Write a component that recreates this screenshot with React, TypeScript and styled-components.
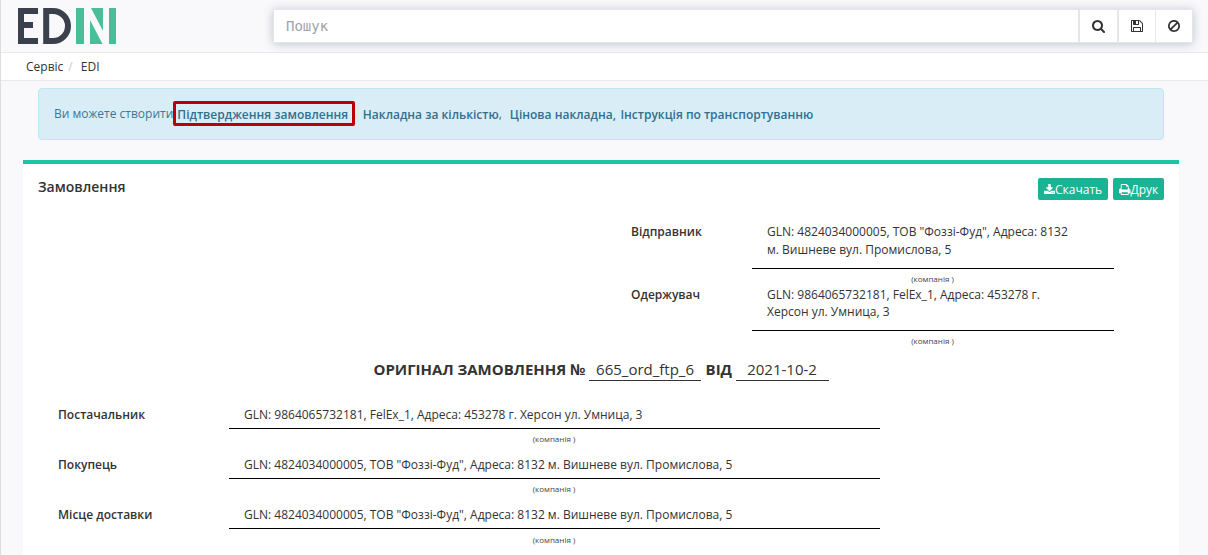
import React from 'react';
import styled, { createGlobalStyle } from 'styled-components';

const GlobalStyle = createGlobalStyle`
  * { box-sizing: border-box; }
  body {
    margin: 0;
    overflow: hidden;
    background: #f9f9fb;
    color: #333;
    font: 12px/18px "Open Sans", sans-serif;
  }
`;

const Page = styled.div`
  height: 555px;
  overflow: hidden;
  border-left: 1px solid #dcdde0;
`;

const Header = styled.header`
  display: flex;
  justify-content: space-between;
  align-items: flex-start;
  height: 53px;
  padding: 8px 15px 0 17px;
  border-bottom: 1px solid #e7eaec;
`;

const SearchBar = styled.div`
  display: flex;
  width: 920px;
  height: 34px;
  margin-top: 1px;
  background: #fff;
  border: 1px solid #e5e6e7;
  box-shadow: 0 1px 9px rgba(60, 70, 100, 0.3);
`;

const SearchInput = styled.input`
  flex: 1;
  min-width: 0;
  border: 0;
  padding: 0 12px;
  outline: 0;
  background: transparent;
  font: 14px "DejaVu Sans Mono", monospace;
  &::placeholder { color: #a2a2a2; opacity: 1; }
`;

const IconButton = styled.button<{ $width: number; $border?: number }>`
  display: flex;
  align-items: center;
  justify-content: center;
  width: ${(p) => p.$width}px;
  padding: 0;
  border: 0;
  border-left: ${(p) => p.$border ?? 1}px solid #e5e6e7;
  background: #fff;
  color: #333;
`;

const Breadcrumb = styled.nav`
  display: flex;
  height: 28px;
  padding: 5px 25px 0;
  background: #fff;
  border-bottom: 1px solid #e7eaec;
`;

const Separator = styled.span`
  width: 17.5px;
  padding-left: 5px;
  color: #ccc;
`;

const Alert = styled.div`
  display: flex;
  height: 52px;
  margin: 7px 44px 20px 37px;
  padding: 16px 15px;
  border: 1px solid #bce8f1;
  border-radius: 4px;
  background: #d9edf7;
  color: #3d7695;
  white-space: pre;
`;

const DocLink = styled.a<{ $gap?: number }>`
  margin: 1px 0 0 ${(p) => p.$gap ?? 0}px;
  font-weight: 600;
  color: #31708f;
`;

const Highlight = styled.span`
  display: flex;
  width: 182px;
  height: 25px;
  margin: -4px 0 0 0;
  padding: 3px 1px 0;
  border: 3px solid #b90006;
  border-radius: 2px;
  line-height: 14px;
`;

const Panel = styled.main`
  height: 400px;
  margin: 0 29px 0 22px;
  border-top: 4px solid #1fc3a4;
  background: #fff;
`;

const PanelHead = styled.div`
  display: flex;
  justify-content: space-between;
  height: 58px;
  padding: 14px 15px 0;
`;

const Title = styled.h5`
  margin: 0;
  font-size: 14px;
  line-height: 18px;
  font-weight: 600;
`;

const Actions = styled.div`
  display: flex;
  gap: 5px;
`;

const ActionButton = styled.button<{ $width: number }>`
  display: flex;
  align-items: center;
  width: ${(p) => p.$width}px;
  height: 22px;
  padding: 1px 0 0 6px;
  border: 0;
  border-radius: 2px;
  background: #1ab394;
  color: #fff;
  font: 12px/18px "Open Sans", sans-serif;

  svg {
    margin-top: -1px;
  }
`;

const Party = styled.div<{ $height: number; $wide?: boolean }>`
  display: grid;
  grid-template-columns: ${(p) => (p.$wide ? '171px 651px' : '121px 362px')};
  height: ${(p) => p.$height}px;
  margin-left: ${(p) => (p.$wide ? 35 : 608)}px;
`;

const Label = styled.div`
  padding-top: 1px;
  font-weight: 600;
`;

const Value = styled.div<{ $height: number; $line?: number }>`
  height: ${(p) => p.$height}px;
  padding: 1px 15px 0;
  border-bottom: 1px solid #000;
  line-height: ${(p) => p.$line ?? 18}px;
  white-space: pre;
`;

const Caption = styled.div<{ $top?: number }>`
  padding-top: ${(p) => p.$top ?? 4}px;
  padding-right: 1px;
  color: #444;
  font: 8px/11px "Open Sans", sans-serif;
  text-align: center;
`;

const DocHeading = styled.h2`
  display: flex;
  height: 55px;
  margin: 0 0 0 350.5px;
  padding-top: 9px;
  font-size: 15px;
  line-height: 20px;
  font-weight: 700;
`;

const Blank = styled.span<{ $width: number; $after: number }>`
  width: ${(p) => p.$width}px;
  height: 22px;
  margin: 0 ${(p) => p.$after}px 0 3.5px;
  border-bottom: 1px solid #333;
  font-weight: 400;
  text-align: center;
`;

const icons = {
  search:
    'M1152 704q0-185-131.5-316.5t-316.5-131.5-316.5 131.5-131.5 316.5 131.5 316.5 316.5 131.5 316.5-131.5 131.5-316.5zm512 832q0 52-38 90t-90 38q-54 0-90-38l-343-342q-179 124-399 124-143 0-273.5-55.5t-225-150-150-225-55.5-273.5 55.5-273.5 150-225 225-150 273.5-55.5 273.5 55.5 225 150 150 225 55.5 273.5q0 220-124 399l343 343q37 37 37 90z',
  save: 'M512 1536h768v-384h-768v384zm896 0h128v-896q0-14-10-38.5t-20-34.5l-281-281q-10-10-34-20t-39-10v416q0 40-28 68t-68 28h-576q-40 0-68-28t-28-68v-416h-128v1280h128v-416q0-40 28-68t68-28h832q40 0 68 28t28 68v416zm-384-928v-320q0-13-9.5-22.5t-22.5-9.5h-192q-13 0-22.5 9.5t-9.5 22.5v320q0 13 9.5 22.5t22.5 9.5h192q13 0 22.5-9.5t9.5-22.5zm640 32v928q0 40-28 68t-68 28h-1344q-40 0-68-28t-28-68v-1344q0-40 28-68t68-28h928q40 0 88 20t76 48l280 280q28 28 48 76t20 88z',
  ban: 'M1440 893q0-161-87-295l-754 753q137 89 297 89 111 0 211.5-43.5t173.5-116.5 116-174.5 43-212.5zm-999 299l755-754q-135-91-300-91-148 0-273 73t-198 199-73 274q0 162 89 299zm1223-299q0 157-61 300t-163.5 246-245 164-298.5 61-298.5-61-245-164-163.5-246-61-300 61-299.5 163.5-245.5 245-164 298.5-61 298.5 61 245 164 163.5 245.5 61 299.5z',
  download:
    'M1344 1344q0-26-19-45t-45-19-45 19-19 45 19 45 45 19 45-19 19-45zm256 0q0-26-19-45t-45-19-45 19-19 45 19 45 45 19 45-19 19-45zm128-224v320q0 40-28 68t-68 28h-1472q-40 0-68-28t-28-68v-320q0-40 28-68t68-28h465l135 136q58 56 136 56t136-56l136-136h464q40 0 68 28t28 68zm-325-569q17 41-14 70l-448 448q-18 19-45 19t-45-19l-448-448q-31-29-14-70 17-39 59-39h256v-448q0-26 19-45t45-19h256q26 0 45 19t19 45v448h256q42 0 59 39z',
  print:
    'M448 1536h896v-256h-896v256zm0-640h896v-384h-160q-40 0-68-28t-28-68v-160h-640v640zm1152 64q0-26-19-45t-45-19-45 19-19 45 19 45 45 19 45-19 19-45zm128 0v416q0 13-9.5 22.5t-22.5 9.5h-224v160q0 40-28 68t-68 28h-960q-40 0-68-28t-28-68v-160h-224q-13 0-22.5-9.5t-9.5-22.5v-416q0-79 56.5-135.5t135.5-56.5h64v-544q0-40 28-68t68-28h672q40 0 88 20t76 48l152 152q28 28 48 76t20 88v256h64q79 0 135.5 56.5t56.5 135.5z',
};

/* Each glyph is cropped to the part of the 1792-unit grid that it fills. */
const boxes: Record<keyof typeof icons, [number, number, number, number]> = {
  search: [0, 0, 1664, 1664],
  save: [128, 128, 1536, 1536],
  ban: [128, 128, 1536, 1536],
  download: [64, 0, 1664, 1536],
  print: [64, 128, 1664, 1536],
};

const Icon = ({ name, width, height }: { name: keyof typeof icons; width: number; height: number }) => (
  <svg width={width} height={height} viewBox={boxes[name].join(' ')} fill="currentColor" preserveAspectRatio="none">
    <path d={icons[name]} />
  </svg>
);

const Logo = () => (
  <svg width="99" height="36" viewBox="0 0 99 36" role="img" aria-label="EDIN">
    <g fill="#3a414d">
      <rect x="0" y="0" width="6" height="36" />
      <rect x="0" y="0" width="20" height="6" />
      <rect x="0" y="14" width="15" height="6" />
      <rect x="0" y="30" width="20" height="6" />
    </g>
    <path d="M28.2 3H35a15 15 0 0 1 0 30H28.2Z" fill="none" stroke="#3a414d" strokeWidth="6" />
    <g fill="#48bf97">
      <rect x="58" y="0" width="8" height="36" />
      <polygon points="73,0 85,0 85,23" />
      <polygon points="72,12 72,36 84.5,36" />
      <rect x="91" y="0" width="7" height="36" />
    </g>
  </svg>
);

const FOZZY = 'GLN: 4824034000005, ТОВ "Фоззі-Фуд", Адреса: 8132';

const parties = [
  { label: 'Постачальник', value: 'GLN: 9864065732181, FelEx_1, Адреса: 453278 г. Херсон ул. Умница, 3', captionTop: 4 },
  { label: 'Покупець', value: `${FOZZY} м. Вишневе вул. Промислова, 5`, captionTop: 4 },
  { label: 'Місце доставки', value: `${FOZZY} м. Вишневе вул. Промислова, 5`, captionTop: 5 },
];

export default function App() {
  return (
    <Page>
      <GlobalStyle />
      <Header>
        <Logo />
        <SearchBar>
          <SearchInput placeholder="Пошук" />
          <IconButton $width={39} $border={2}><Icon name="search" width={13} height={13} /></IconButton>
          <IconButton $width={38} $border={2}><Icon name="save" width={12} height={12} /></IconButton>
          <IconButton $width={37}><Icon name="ban" width={12} height={12} /></IconButton>
        </SearchBar>
      </Header>
      <Breadcrumb>
        <span>Сервіс</span>
        <Separator>/</Separator>
        <span>EDI</span>
      </Breadcrumb>
      <Alert>
        <span>Ви можете створити</span>
        <Highlight><DocLink>Підтвердження замовлення</DocLink></Highlight>
        <DocLink $gap={7.5}>Накладна за кількістю</DocLink>,
        <DocLink $gap={8}>Цінова накладна,</DocLink>
        <DocLink $gap={4.5}>Інструкція по транспортуванню</DocLink>
      </Alert>
      <Panel>
        <PanelHead>
          <Title>Замовлення</Title>
          <Actions>
            <ActionButton $width={70}><Icon name="download" width={11} height={10} />Скачать</ActionButton>
            <ActionButton $width={51}><Icon name="print" width={11.5} height={11} />Друк</ActionButton>
          </Actions>
        </PanelHead>
        <Party $height={63}>
          <Label>Відправник</Label>
          <div>
            <Value $height={47}>{FOZZY + '\nм. Вишневе вул. Промислова, 5'}</Value>
            <Caption>(компанія )</Caption>
          </div>
        </Party>
        <Party $height={65}>
          <Label>Одержувач</Label>
          <div>
            <Value $height={46} $line={17.4}>{'GLN: 9864065732181, FelEx_1, Адреса: 453278 г.\nХерсон ул. Умница, 3'}</Value>
            <Caption>(компанія )</Caption>
          </div>
        </Party>
        <DocHeading>
          <span>ОРИГІНАЛ ЗАМОВЛЕННЯ №</span>
          <Blank $width={112} $after={4.5}>665_ord_ftp_6</Blank>
          <span>ВІД</span>
          <Blank $width={93} $after={0}>2021-10-2</Blank>
        </DocHeading>
        {parties.map((p) => (
          <Party key={p.label} $height={50} $wide>
            <Label>{p.label}</Label>
            <div>
              <Value $height={24}>{p.value}</Value>
              <Caption $top={p.captionTop}>(компанія )</Caption>
            </div>
          </Party>
        ))}
      </Panel>
    </Page>
  );
}
